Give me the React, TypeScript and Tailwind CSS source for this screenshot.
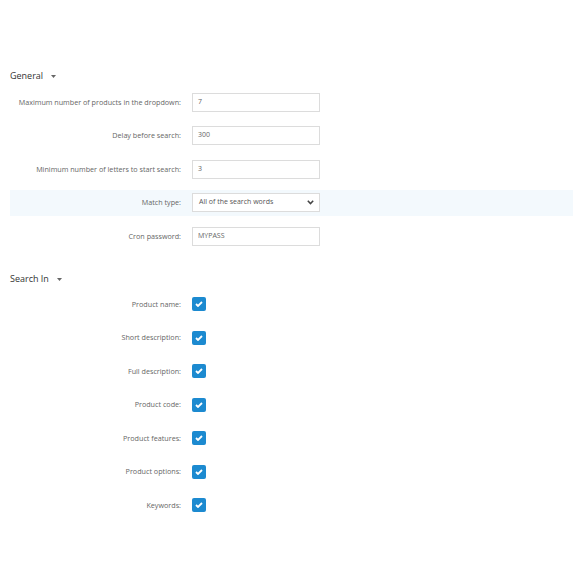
import React from "react";

const font = { fontFamily: '"Open Sans", "Segoe UI", sans-serif' };

function Caret() {
  return (
    <svg width="5" height="3" viewBox="0 0 5 3" className="ml-[8px] mt-[1px]">
      <path d="M0 0 L5 0 L2.5 3 Z" fill="#666" />
    </svg>
  );
}

function Heading({ text }: { text: string }) {
  return (
    <div className="h-[14px] flex items-center text-[9px] text-[#333]">
      <span>{text}</span>
      <Caret />
    </div>
  );
}

function Row({ label, children, highlight }: { label: string; children: React.ReactNode; highlight?: boolean }) {
  return (
    <div className={"h-[26px] flex items-center " + (highlight ? "bg-[#f3f9fd]" : "")}>
      <div className="w-[171px] text-right text-[7.2px] text-[#666]">{label}</div>
      <div className="ml-[11px]">{children}</div>
    </div>
  );
}

function Input({ value }: { value: string }) {
  return (
    <div className="w-[128px] h-[19px] border border-[#dcdcdc] bg-white flex items-center pl-[5px] text-[7px] text-[#666]">
      {value}
    </div>
  );
}

function Select({ value }: { value: string }) {
  return (
    <div className="w-[128px] h-[19px] border border-[#dcdcdc] bg-white flex items-center justify-between pl-[6px] pr-[5px] text-[7px] text-[#555]">
      <span>{value}</span>
      <svg width="7" height="5" viewBox="0 0 7 5">
        <path d="M0.8 0.8 L3.5 3.6 L6.2 0.8" fill="none" stroke="#444" strokeWidth="1.5" />
      </svg>
    </div>
  );
}

function Check() {
  return (
    <div className="w-[14px] h-[14px] rounded-[2px] bg-[#1c8ad0] flex items-center justify-center">
      <svg width="8" height="6" viewBox="0 0 8 6">
        <path d="M1 3 L3 5 L7 1" fill="none" stroke="#fff" strokeWidth="1.8" />
      </svg>
    </div>
  );
}

export default function App() {
  const checks = [
    "Product name:",
    "Short description:",
    "Full description:",
    "Product code:",
    "Product features:",
    "Product options:",
    "Keywords:",
  ];
  return (
    <div className="w-[580px] h-[580px] bg-white pt-[69px] pl-[10px] pr-[7px] flex flex-col" style={font}>
      <Heading text="General" />
      <div className="mt-[6px] flex flex-col gap-[7.5px]">
        <Row label="Maximum number of products in the dropdown:">
          <Input value="7" />
        </Row>
        <Row label="Delay before search:">
          <Input value="300" />
        </Row>
        <Row label="Minimum number of letters to start search:">
          <Input value="3" />
        </Row>
        <Row label="Match type:" highlight>
          <Select value="All of the search words" />
        </Row>
        <Row label="Cron password:">
          <Input value="MYPASS" />
        </Row>
      </div>
      <div className="mt-[23px]">
        <Heading text="Search In" />
      </div>
      <div className="mt-[5px] flex flex-col gap-[7.5px]">
        {checks.map((c) => (
          <Row key={c} label={c}>
            <Check />
          </Row>
        ))}
      </div>
    </div>
  );
}
